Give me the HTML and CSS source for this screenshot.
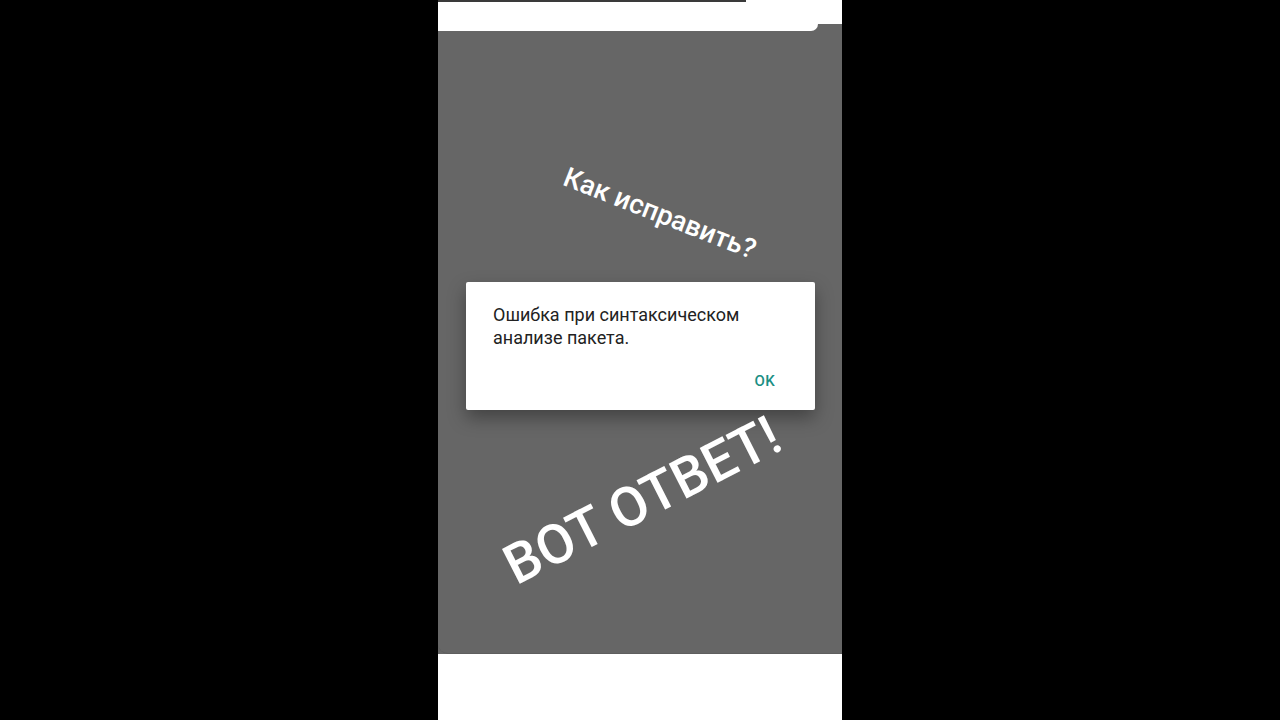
FILE: index.html
```html
<!DOCTYPE html>
<html lang="ru">
<head>
<meta charset="utf-8">
<link rel="stylesheet" href="styles.css">
</head>
<body>
<div class="phone">
  <div class="top-strip"><div class="top-line"></div></div>
  <div class="top-tab"></div>
  <div class="screen">
    <div class="dialog">
      <p class="msg">Ошибка при синтаксическом анализе пакета.</p>
      <div class="actions"><span class="ok">OK</span></div>
    </div>
    <div class="caption caption-q">Как исправить?</div>
    <div class="caption caption-a">ВОТ ОТВЕТ!</div>
  </div>
  <div class="bottom"></div>
</div>
</body>
</html>
```
FILE: styles.css
```css
html, body {
  margin: 0;
  padding: 0;
  background: #000;
  width: 1280px;
  height: 720px;
  overflow: hidden;
  font-family: Roboto, "Noto Sans", sans-serif;
}
body {
  display: flex;
  justify-content: center;
}
.phone {
  width: 404px;
  height: 720px;
  background: #666;
  display: flex;
  flex-direction: column;
}
.top-strip {
  height: 24px;
  background: #fff;
}
.top-line {
  width: 308px;
  height: 2px;
  background: #3a3a3a;
}
.top-tab {
  height: 7px;
  width: 380px;
  background: #fff;
  border-bottom-right-radius: 7px;
}
.screen {
  position: relative;
  flex: 1;
  display: flex;
  justify-content: center;
  align-items: center;
  border-bottom: 1px solid #5e5e5e;
  border-bottom-left-radius: 10px;
  padding-top: 8px;
  padding-left: 1px;
  box-sizing: border-box;
}
.bottom {
  height: 66px;
  background: #fff;
}
.dialog {
  width: 349px;
  height: 128px;
  box-sizing: border-box;
  background: #fff;
  border-radius: 2px;
  box-shadow: 0 8px 18px rgba(0,0,0,0.35);
  padding: 21px 20px 0 27px;
  display: flex;
  flex-direction: column;
}
.msg {
  margin: 0;
  font-size: 18px;
  line-height: 23px;
  color: #222;
  width: 290px;
}
.actions {
  display: flex;
  justify-content: flex-end;
  margin-top: 23px;
  padding-right: 20px;
}
.ok {
  color: #1b8f84;
  font-weight: 500;
  font-size: 15px;
  letter-spacing: 0.3px;
}
.caption {
  position: absolute;
  color: #fff;
  white-space: nowrap;
  font-weight: 500;
  transform-origin: center center;
}
.caption-q {
  font-size: 27.5px;
  left: 222px;
  top: 182px;
  transform: translate(-50%, -50%) rotate(21.5deg);
}
.caption-a {
  font-size: 55px;
  left: 204px;
  top: 469px;
  transform: translate(-50%, -50%) rotate(-27deg);
}
```
